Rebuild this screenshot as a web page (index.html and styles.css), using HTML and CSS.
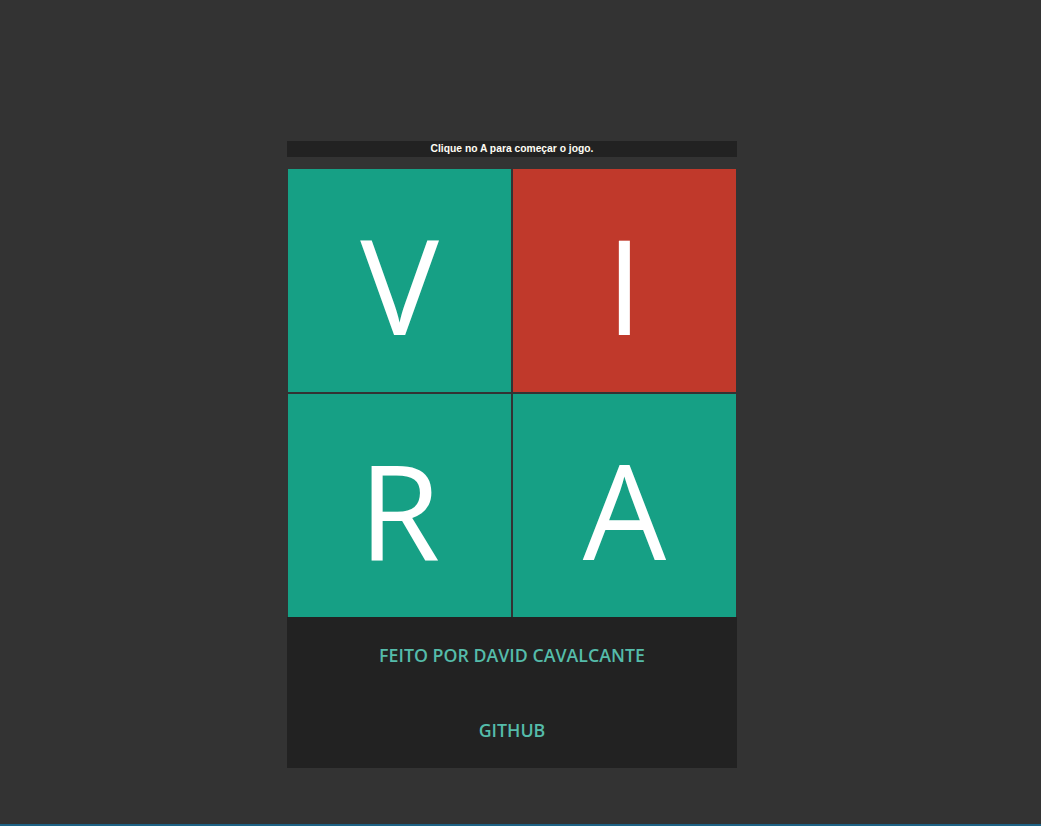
FILE: index.html
```html
<!DOCTYPE html>
<html lang="pt">
<head>
<meta charset="utf-8">
<title>Vira</title>
<link rel="stylesheet" href="styles.css">
</head>
<body>
<main class="game">
  <div class="status">Clique no A para começar o jogo.</div>
  <div class="board">
    <div class="tile tile-green"><span>V</span></div>
    <div class="tile tile-red"><span>I</span></div>
    <div class="tile tile-green"><span>R</span></div>
    <div class="tile tile-green"><span>A</span></div>
  </div>
  <footer class="credits">
    <a class="credit-link" href="#">FEITO POR DAVID CAVALCANTE</a>
    <a class="credit-link" href="#">GITHUB</a>
  </footer>
</main>
</body>
</html>
```
FILE: styles.css
```css
* { box-sizing: border-box; }
html, body { margin: 0; padding: 0; }
body {
  background: #333333;
  min-height: 100vh;
  padding-right: 17px;
  border-bottom: 2px solid #1d6285;
  font-family: "Open Sans", "Liberation Sans", sans-serif;
}
.game {
  width: 450px;
  margin: 0 auto;
  padding-top: 141px;
  display: flex;
  flex-direction: column;
}
.status {
  height: 16px;
  background: #222222;
  color: #fffef5;
  font-family: "Liberation Sans", Arial, sans-serif;
  font-weight: bold;
  font-size: 10.3px;
  line-height: 16px;
  text-align: center;
  margin-bottom: 11px;
}
.board {
  display: grid;
  grid-template-columns: 223px 223px;
  grid-auto-rows: 223px;
  gap: 2px;
  padding: 1px 1px 0 1px;
}
.tile {
  display: flex;
  align-items: center;
  justify-content: center;
  color: #ffffff;
  font-size: 132px;
  font-weight: 400;
  line-height: 1;
  padding-top: 6px;
}
.tile-green { background: #16a085; }
.tile-red { background: #c0392b; }
.credits {
  height: 151px;
  background: #222222;
  display: flex;
  flex-direction: column;
  align-items: center;
  padding-top: 26px;
  gap: 51px;
}
.credit-link {
  color: #55bcaa;
  text-decoration: none;
  font-weight: 600;
  font-size: 17.8px;
  line-height: 24px;
}
```
